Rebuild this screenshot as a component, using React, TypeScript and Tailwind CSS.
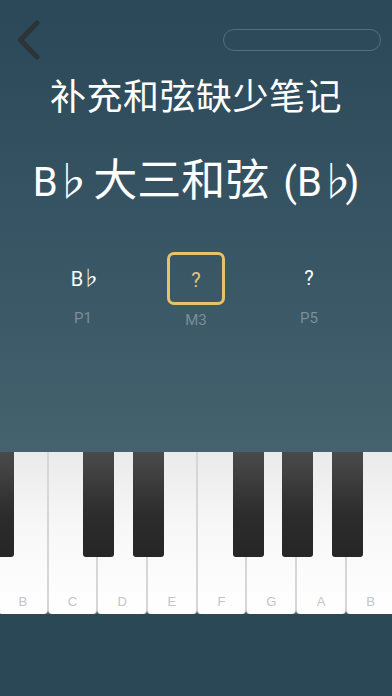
import React from "react";

const whiteKeys = ["B", "C", "D", "E", "F", "G", "A", "B"];
const blackKeys = [-17, 83, 133, 233, 282, 332];

// B followed by a flat sign, kerned tight with letter-spacing
const BFlat = () => (
  <>
    <span className="tracking-[-0.13em]">B</span>
    <span className="tracking-[-0.28em]" style={{ fontFamily: '"Noto Sans CJK SC", sans-serif' }}>
      ♭
    </span>
  </>
);

const notes = [
  { name: "B", flat: true, interval: "P1", active: false },
  { name: "?", flat: false, interval: "M3", active: true },
  { name: "?", flat: false, interval: "P5", active: false },
];

export default function App() {
  return (
    <div
      className="w-[392px] h-[696px] overflow-hidden flex flex-col bg-[linear-gradient(180deg,#2b4858_0%,#3b5967_45%,#45626e_65%)] text-white"
      style={{ fontFamily: 'Roboto, "Noto Sans CJK SC", sans-serif' }}
    >
      {/* header */}
      <div className="h-[78px] flex flex-row items-start justify-between pl-[16px] pr-[11px]">
        <svg width="26" height="40" viewBox="0 0 26 40" className="mt-[20px]">
          <path d="M21 3 L4.5 20 L21 37" fill="none" stroke="#2d3437" strokeWidth="5" strokeLinecap="round" strokeLinejoin="round" />
        </svg>
        <div className="mt-[29px] w-[158px] h-[22px] rounded-full border border-white/20"></div>
      </div>

      <div className="text-center text-[36px] leading-[40px] tracking-[0.5px]">补充和弦缺少笔记</div>

      <div className="mt-[36px] flex flex-row items-baseline justify-center text-[40px] leading-[50px]">
        <span className="mr-[12px]">
          <BFlat />
        </span>
        <span className="text-[44px]">大三和弦</span>
        <span className="ml-[14px]">
          (<BFlat />)
        </span>
      </div>

      {/* notes */}
      <div className="mt-[44px] mx-auto w-[339px] grid grid-cols-3">
        {notes.map((n, i) => (
          <div key={i} className="flex flex-col items-center">
            {n.active ? (
              <>
                <div className="w-[58px] h-[53px] rounded-[7px] border-[3px] border-[#e6c36a] flex items-center justify-center text-[20px] text-[#e6c36a] pt-[3px]">
                  {n.name}
                </div>
                <div className="mt-[5px] text-[15px] leading-[20px] text-[#7a909a]">{n.interval}</div>
              </>
            ) : (
              <>
                <div className="mt-[13px] h-[26px] text-[20px] leading-[26px]">
                  {n.flat ? <BFlat /> : n.name}
                </div>
                <div className="mt-[17px] text-[15px] leading-[20px] text-[#7a909a]">{n.interval}</div>
              </>
            )}
          </div>
        ))}
      </div>

      {/* piano */}
      <div className="mt-[122px] relative h-[162px] overflow-hidden">
        <div className="flex flex-row w-[398px] h-full -ml-[2px]">
          {whiteKeys.map((k, i) => (
            <div
              key={i}
              className="w-[49.7px] h-full shrink-0 border-x-[0.5px] border-[#d6d6d6] rounded-b-[4px] bg-[linear-gradient(180deg,#eaeaea_0%,#f7f7f7_45%,#ffffff_100%)] flex items-end justify-center pb-[3px]"
            >
              <span className="text-[13px] leading-[18px] text-[#c4c4c4]" style={{ fontFamily: '"Liberation Sans", sans-serif' }}>{k}</span>
            </div>
          ))}
        </div>
        {blackKeys.map((x, i) => (
          <div
            key={i}
            className="absolute top-0 w-[31px] h-[105px] rounded-b-[3px] bg-[linear-gradient(180deg,#4a4a4a_0%,#2c2c2c_60%,#262626_100%)]"
            style={{ left: x }}
          ></div>
        ))}
      </div>

      <div className="flex-1 bg-[#2b4856]"></div>
    </div>
  );
}
